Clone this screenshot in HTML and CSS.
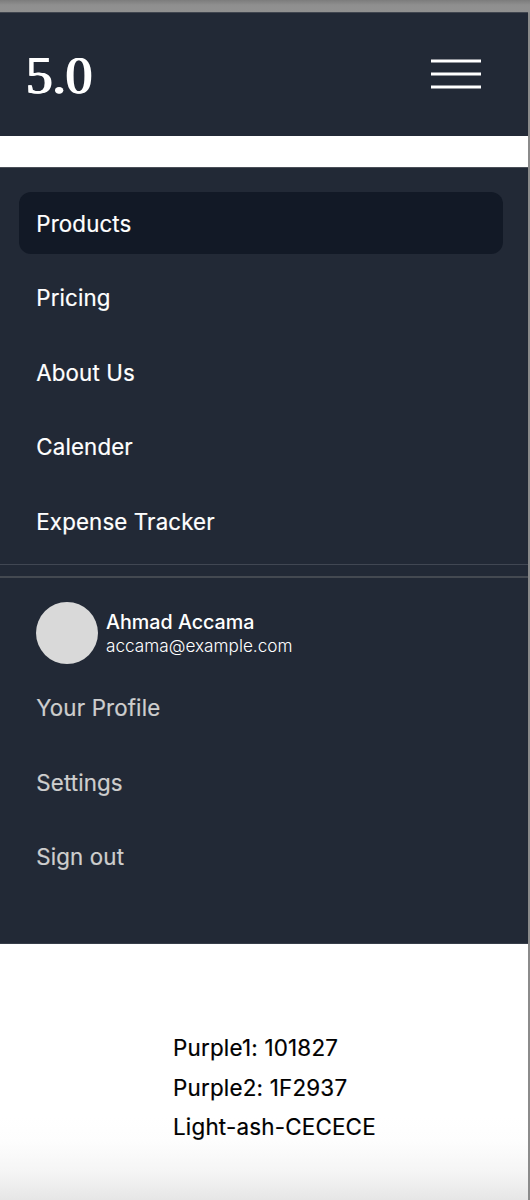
FILE: index.html
```html
<!DOCTYPE html>
<html lang="en">
<head>
<meta charset="utf-8">
<title>5.0</title>
<link rel="stylesheet" href="styles.css">
</head>
<body>
<div class="page">
  <header class="topbar">
    <div class="logo">5.0</div>
    <svg class="menu-icon" width="50" height="30" viewBox="0 0 50 30" aria-label="Menu">
      <path d="M0 1.95H50M0 14.95H50M0 27.95H50" stroke="#fff" stroke-width="3.1"/>
    </svg>
  </header>
  <nav class="drawer">
    <div class="links">
      <a class="link active">Products</a>
      <a class="link">Pricing</a>
      <a class="link">About Us</a>
      <a class="link">Calender</a>
      <a class="link">Expense Tracker</a>
    </div>
    <div class="divider"></div>
    <div class="user">
      <div class="avatar"></div>
      <div class="identity">
        <div class="name">Ahmad Accama</div>
        <div class="email">accama@example.com</div>
      </div>
    </div>
    <div class="links account">
      <a class="link">Your Profile</a>
      <a class="link">Settings</a>
      <a class="link">Sign out</a>
    </div>
  </nav>
  <section class="palette">
    <div>Purple1: 101827</div>
    <div>Purple2: 1F2937</div>
    <div>Light-ash-CECECE</div>
  </section>
</div>
</body>
</html>
```
FILE: styles.css
```css
* { box-sizing: border-box; }
body {
  margin: 0;
  height: 1200px;
  overflow: hidden;
  padding: 12px 2px 0 0;
  background: linear-gradient(#7c7c7c, #8f8f8f 5px, #919191 12px, #8b8b8b 13px);
  font-family: Inter, "Liberation Sans", sans-serif;
}
.page {
  height: 1188px;
  background: linear-gradient(#fff 0 1105px, #fdfdfd 1130px, #f5f5f5 1160px, #e6e6e6 1188px);
}
.topbar {
  height: 124px;
  display: flex;
  justify-content: space-between;
  padding: 0 47px 0 25px;
  background: #222936;
  border-top: 1px solid #414650;
}
.logo {
  padding-top: 32px;
  font: 53px/60px "Liberation Serif", serif;
  color: #fff;
  text-shadow: 1px 0 #fff, 2px 0 #fff;
}
.menu-icon { margin-top: 46px; }
.drawer {
  height: 777px;
  margin-top: 31px;
  padding-top: 24px;
  background: #222936;
  border-top: 1px solid #4a4f58;
  border-bottom: 1px solid #363d49;
}
.links {
  display: flex;
  flex-direction: column;
  gap: 12.4px;
  padding: 0 25px 0 19px;
}
.link {
  height: 62px;
  padding-left: 17.3px;
  border-radius: 12px;
  font-size: 22.3px;
  line-height: 63px;
  letter-spacing: 0.14px;
  color: #fff;
  -webkit-text-stroke: 0.2px currentColor;
}
.active { background: #121926; }
.divider {
  height: 14px;
  margin-top: 12.4px;
  border-top: 1px solid #414753;
  border-bottom: 2px solid #444951;
}
.user {
  display: flex;
  gap: 8px;
  padding: 24px 0 0 36px;
}
.avatar {
  width: 62px;
  height: 62px;
  border-radius: 50%;
  background: #d9d9d9;
}
.identity { padding-top: 7px; color: #fff; }
.name { font-size: 19.7px; line-height: 26px; font-weight: 500; }
.email { font-size: 17.2px; line-height: 21px; font-weight: 300; }
.account { margin-top: 12.2px; }
.account .link { color: #cecece; }
.palette {
  padding: 84px 0 0 173px;
  font-size: 22.4px;
  line-height: 39.7px;
  letter-spacing: 0.2px;
  color: #000;
  -webkit-text-stroke: 0.2px currentColor;
}
```
